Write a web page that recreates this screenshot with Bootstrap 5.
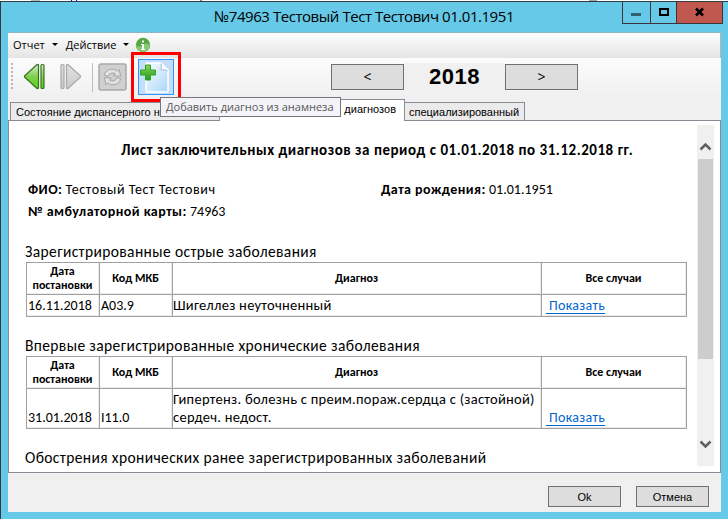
<!DOCTYPE html>
<html lang="ru">
<head>
<meta charset="utf-8">
<meta name="viewport" content="width=device-width, initial-scale=1">
<title>Лист заключительных диагнозов</title>
<link href="https://cdn.jsdelivr.net/npm/bootstrap@5.3.0/dist/css/bootstrap.min.css" rel="stylesheet">
<script src="https://cdn.jsdelivr.net/npm/bootstrap@5.3.0/dist/js/bootstrap.bundle.min.js" defer></script>
<style>
body { width: 728px; height: 519px; overflow: hidden; background: #fff; color: #000; font: 11px/14px "Liberation Sans", Arial, sans-serif; }
.backdrop-row { height: 1px; background: linear-gradient(90deg, #fff 31px, #a9bfc4 31px 40px, #fff 40px 71px, #00f 71px 72px, #fff 72px 76px, #00f 76px 77px, #fff 77px 200px, #888 200px 202px, #fff 202px 589px, #9ab 589px 597px, #fff 597px); }
.win { height: 518px; background: #66c9e8; border-top: 1px solid #333b40; border-left: 1px solid #333b40; padding: 0 7px 7px; }
.titlebar { height: 30px; }
.caption-text { font: 15px/29px "Open Sans", "Noto Sans", sans-serif; letter-spacing: -.45px; padding-left: 206px; width: 614px; white-space: nowrap; }
.win-btns { height: 22px; border: 1px solid #3d3338; border-top: 0; margin-right: -2px; width: 101px; }
.win-btns > span + span { border-left: 1px solid #3d3338; }
.wb-min { width: 27px; } .wb-max { width: 26px; } .wb-close { background: #c1584f; }
.client { height: 480px; background: #f0f0f0; border-top: 1px solid #8fb6c4; }
.menu-strip { height: 25px; background: linear-gradient(#fdfdfd, #e5e5e5); font: 11px/22px "Open Sans", "Noto Sans", sans-serif; padding: 0 0 2px 5px; border-right: 1px solid #b5b5b5; }
.arrow-down { border: 3px solid transparent; border-top-color: #000; border-bottom: 0; margin-left: 7px; }
.tool-strip { height: 39px; background: linear-gradient(#fcfcfc, #f0f0f0); padding-left: 3px; }
.grip { width: 2px; height: 27px; margin-top: 5px; background: repeating-linear-gradient(#b8b8b8 0 2px, transparent 2px 4px); }
.split { width: 1px; height: 29px; background: #bdbdbd; margin-top: 5px; }
.add-doc { width: 36px; height: 36px; background: #c3defb; border: 1px solid #3494ff; margin-top: 1px; }
.marker-frame { outline: 3px solid #f00; outline-offset: 4.4px; }
.gray-btn { background: #ddd; border: 1px solid #707070; border-radius: 0; color: #000; padding: 0; }
.year-nav { padding-left: 14px; }
.year-btn { width: 73px; height: 26px; margin-top: 6px; font: 14px/22px "Open Sans", sans-serif; }
.year { width: 101px; height: 28px; margin-top: 5px; background: #f0f0f0; font: bold 22px/28px "Liberation Sans", Arial, sans-serif; letter-spacing: .5px; }
.tabs { height: 23px; padding: 2px 0 0 2px; }
.tab { border: 1px solid #898c95; border-bottom: 0; background: #ebebeb; height: 18px; line-height: 19px; white-space: nowrap; overflow: hidden; }
.tab-a { width: 210px; padding-left: 5px; letter-spacing: .03px; }
.tab-b { width: 185px; height: 21px; line-height: 19px; background: #fff; border-left: 0; padding-right: 8px; margin-bottom: -1px; z-index: 1; height: 22px; }
.tab-c { width: 120px; padding-left: 4px; border-left: 0; }
.panel { height: 353px; border: 1px solid #898c95; background: #fff; overflow: hidden; }
.doc { width: 688px; padding: 19px 10px 0 16px; font: 14px/20px Carlito, Calibri, Lato, sans-serif; }
.doc-title { font-weight: 700; font-size: 15px; letter-spacing: .53px; padding-left: 96px; margin-bottom: 20px; white-space: nowrap; }
.doc-line { padding-left: 3px; height: 22px; white-space: nowrap; }
.doc-line b { letter-spacing: .45px; }
.doc-line .person { letter-spacing: .6px; }
.half { width: 353px; }
.sect { font-size: 15.5px; letter-spacing: .38px; line-height: 20px; white-space: nowrap; }
.first { margin-top: 18px; }
.diag { width: 661px; table-layout: fixed; border-collapse: collapse; margin: 0 0 19px 1px; line-height: 18px; }
.diag th, .diag td { border: 1px solid #a0a0a0; box-shadow: inset -1px -1px #ececec; padding: 0 1px; vertical-align: bottom; }
.diag th { font-size: 12px; line-height: 14px; text-align: center; vertical-align: middle; height: 32px; padding: 0 1px 1px 0; }
.diag td { height: 22px; padding-bottom: 1px; }
.diag .tall td { height: 40px; }
.diag .name { font-size: 14.5px; letter-spacing: .27px; padding-left: 0; padding-bottom: 2px; }
.c1, .c2 { width: 73px; } .c4 { width: 145px; }
.show-link { color: #0066cc; text-decoration: none; border-bottom: 1px solid #0066cc; letter-spacing: .3px; padding-left: 3px; margin-left: 3px; display: inline-block; line-height: 15px; }
.scroll { width: 17px; height: 341px; margin-top: 4px; background: #f0f0f0; }
.scroll .up { height: 34px; padding-top: 15px; }
.scroll .thumb { height: 200px; width: 15px; background: #cdcdcd; }
.scroll svg { display: block; }
.foot { height: 40px; padding: 13px 12px 0 0; gap: 15px; }
.foot .gray-btn { width: 73px; height: 21px; font: 11px/18px "Liberation Sans", Arial, sans-serif; }
.tip { left: 160px; top: 97px; width: 181px; height: 20px; background: #f3f3f8; border: 1px solid #767676; color: #575757; font: 11px/18px "Open Sans", "Noto Sans", sans-serif; padding-left: 5px; white-space: nowrap; z-index: 5; }
</style>
</head>
<body class="position-relative">
<div class="backdrop-row"></div>
<div class="win">
  <header class="titlebar d-flex justify-content-between">
    <div class="caption-text">№74963 Тестовый Тест Тестович 01.01.1951</div>
    <div class="win-btns d-flex flex-shrink-0">
      <span class="wb-min"><svg width="26" height="21"><path d="M8 11h10v3H8z" fill="#33606f"/></svg></span>
      <span class="wb-max"><svg width="25" height="21"><path d="M9 7h8v6H9z" fill="none" stroke="#000" stroke-width="2"/></svg></span>
      <span class="wb-close flex-grow-1"><svg width="45" height="21"><path d="M19 6.500l7 7M26 6.500l-7 7" stroke="#000" stroke-width="2.600"/></svg></span>
    </div>
  </header>
  <main class="client">
    <nav class="menu-strip d-flex align-items-center">
      <span>Отчет</span><i class="arrow-down"></i>
      <span class="ms-2">Действие</span><i class="arrow-down"></i>
      <svg class="ms-1" width="20" height="16" viewBox="-2 0 20 16"><circle cx="8" cy="8" r="7.200" fill="#56a746"/><path d="M1 8a7 7 0 0 0 14 0q-3-3-7 0t-7 0z" fill="#86c870"/><path d="M6 7h3v5h1v1H6v-1h1V8H6zM7 3.500h2v2H7z" fill="#fff"/></svg>
    </nav>
    <div class="tool-strip d-flex">
      <div class="grip"></div>
      <svg class="ms-2" width="72" height="38" viewBox="21 57 72 38">
        <defs><linearGradient id="g" x2="0" y2="1"><stop stop-color="#d4efc7"/><stop offset=".5" stop-color="#7ed04e"/><stop offset="1" stop-color="#55d811"/></linearGradient><linearGradient id="h" x2="0" y2="1"><stop stop-color="#e2e2e2"/><stop offset="1" stop-color="#c9c9c9"/></linearGradient></defs>
        <g fill="url(#g)" stroke="#3b7023" stroke-width="1.200" stroke-linejoin="round"><path d="M38.500 64v23q-1 1-2 0L24.500 76v-1L36.500 64q1-1 2 0z"/><rect x="41" y="63.500" width="3" height="24" rx="1"/></g>
        <g fill="url(#h)" stroke="#a9a9a9" stroke-width="1.200" stroke-linejoin="round"><path d="M66.500 64v23q1 1 2 0L80.500 76v-1L68.500 64q-1-1-2 0z"/><rect x="61" y="63.500" width="3" height="24" rx="1"/></g>
        <path d="M92.500 62v29" stroke="#bdbdbd"/>
      </svg>
      <svg class="ms-1" width="32" height="38" viewBox="97 57 32 38"><rect x="99" y="63" width="27" height="26" rx="2" fill="#d0d0d0" stroke="#a9a9a9" stroke-width="1.500"/><g transform="rotate(20 112.500 76)" fill="#e2e2e2" stroke="#a3a3a3" stroke-width=".9" stroke-linejoin="round"><path id="half-turn" d="M104 77a8 8 0 0 1 11-8l1-2.500 4 6-7 2 1-2.500a5 5 0 0 0-6 5z"/><path d="M121 75a8 8 0 0 1-11 8l-1 2.500-4-6 7-2-1 2.500a5 5 0 0 0 6-5z"/></g></svg>
      <div class="split ms-1"></div>
      <button class="add-doc marker-frame ms-1 p-0 d-block" aria-label="Добавить диагноз"><svg class="d-block" width="34" height="34" viewBox="0 0 34 34"><defs><linearGradient id="p" x2="1" y2="1"><stop stop-color="#fafdff"/><stop offset="1" stop-color="#a9d6fb"/></linearGradient><linearGradient id="q" x2="0" y2="1"><stop stop-color="#83d45d"/><stop offset="1" stop-color="#249b18"/></linearGradient></defs><path d="M8 3h14l7 7v21q0 1-1 1H8q-1 0-1-1V4q0-1 1-1z" fill="url(#p)" stroke="#fff" stroke-width="1.500"/><path d="M22 3.500q1 3.500 0 6.500 4-1 6.500 1" fill="#fff" stroke="#8fb4d8" stroke-width=".8"/><path d="M6.500 5h5v5h5v5h-5v5h-5v-5h-5v-5h5z" fill="url(#q)" stroke="#35a323" stroke-linejoin="round"/></svg></button>
      <div class="d-flex ms-auto me-auto year-nav">
        <button class="gray-btn year-btn">&lt;</button>
        <div class="year text-center">2018</div>
        <button class="gray-btn year-btn">&gt;</button>
      </div>
    </div>
    <div class="tabs d-flex align-items-end">
      <div class="tab tab-a">Состояние диспансерного н</div>
      <div class="tab tab-b text-end">диагнозов</div>
      <div class="tab tab-c">специализированный</div>
    </div>
    <section class="panel d-flex">
      <article class="doc flex-shrink-0">
        <div class="doc-title">Лист заключительных диагнозов за период с 01.01.2018 по 31.12.2018 гг.</div>
        <div class="doc-line d-flex"><div class="half"><b>ФИО:</b> <span class="person">Тестовый Тест Тестович</span></div><div><b>Дата рождения:</b> 01.01.1951</div></div>
        <div class="doc-line"><b>№ амбулаторной карты:</b> 74963</div>
        <div class="sect first">Зарегистрированные острые заболевания</div>
        <table class="diag">
          <thead><tr><th class="c1">Дата постановки</th><th class="c2">Код МКБ</th><th>Диагноз</th><th class="c4">Все случаи</th></tr></thead>
          <tbody><tr><td>16.11.2018</td><td>A03.9</td><td class="name">Шигеллез неуточненный</td><td><a class="show-link" href="#">Показать</a></td></tr></tbody>
        </table>
        <div class="sect">Впервые зарегистрированные хронические заболевания</div>
        <table class="diag">
          <thead><tr><th class="c1">Дата постановки</th><th class="c2">Код МКБ</th><th>Диагноз</th><th class="c4">Все случаи</th></tr></thead>
          <tbody><tr class="tall"><td>31.01.2018</td><td>I11.0</td><td class="name">Гипертенз. болезнь с преим.пораж.сердца с (застойной) сердеч. недост.</td><td><a class="show-link" href="#">Показать</a></td></tr></tbody>
        </table>
        <div class="sect">Обострения хронических ранее зарегистрированных заболеваний</div>
      </article>
      <div class="scroll d-flex flex-column">
        <div class="up"><svg width="17" height="12"><path d="M3.500 9.500L8.500 4.500l5 5" fill="none" stroke="#606060" stroke-width="2.500"/></svg></div>
        <div class="thumb mx-auto"></div>
        <svg class="mt-auto mb-3" width="17" height="12"><path d="M3.500 3.500L8.500 8.500l5-5" fill="none" stroke="#606060" stroke-width="2.500"/></svg>
      </div>
    </section>
    <footer class="foot d-flex justify-content-end">
      <button class="gray-btn">Ok</button>
      <button class="gray-btn">Отмена</button>
    </footer>
  </main>
</div>
<div class="tip position-absolute" role="tooltip">Добавить диагноз из анамнеза</div>
</body>
</html>
